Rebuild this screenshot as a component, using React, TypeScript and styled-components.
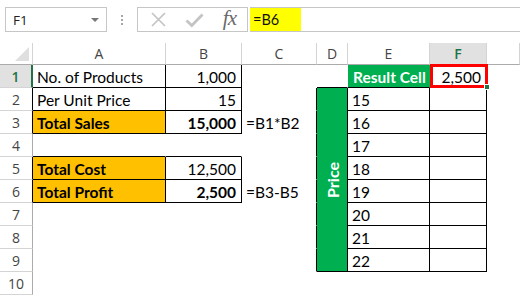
import React from "react";
import styled, { createGlobalStyle } from "styled-components";

const INK = "#000";
const HEAD_LINE = "#d4d4d4";
const SELECT_GREEN = "#217346";
const ORANGE = "#ffc000";
const GREEN = "#00b050";

const GlobalStyle = createGlobalStyle`
  html, body {
    margin: 0;
    padding: 0;
    background: #fff;
  }
  body {
    width: 520px;
    height: 295px;
    overflow: hidden;
    font-family: Lato, "Liberation Sans", sans-serif;
  }
`;

/* ---------- formula bar ---------- */

const Toolbar = styled.div`
  display: flex;
  align-items: stretch;
  height: 25px;
  padding: 7px 0 11px 5px;
`;

const NameBox = styled.div`
  box-sizing: border-box;
  width: 102px;
  border: 1px solid #c6c6c6;
  display: flex;
  align-items: center;
  justify-content: space-between;
  padding: 0 7px 0 7px;
  font-family: "Open Sans", "Liberation Sans", sans-serif;
  font-size: 13.5px;
  color: #222;
`;

const DropArrow = styled.span`
  width: 0;
  height: 0;
  border-left: 4px solid transparent;
  border-right: 4px solid transparent;
  border-top: 4px solid #777;
`;

const Grip = styled.div`
  width: 30px;
  display: flex;
  flex-direction: column;
  align-items: center;
  justify-content: center;
  gap: 2px;
  span {
    width: 2px;
    height: 2px;
    background: #a6a6a6;
  }
`;

const FxBox = styled.div`
  box-sizing: border-box;
  width: 111px;
  border: 1px solid #c6c6c6;
  display: flex;
  align-items: center;
  justify-content: space-between;
  padding: 0 11px 0 12px;
`;

const FxLabel = styled.span`
  font-family: "Liberation Serif", serif;
  font-style: italic;
  font-size: 21px;
  color: #6a6a6a;
  letter-spacing: -1px;
  margin-top: -2px;
`;

const FormulaInput = styled.div`
  flex: 1;
  margin-left: 2px;
  border-top: 1px solid #c6c6c6;
  border-bottom: 1px solid #c6c6c6;
  display: flex;
`;

const Highlight = styled.span`
  width: 51px;
  background: #ffff00;
  display: flex;
  align-items: center;
  padding-left: 3px;
  box-sizing: border-box;
  font-size: 14.5px;
  color: #111;
`;

/* ---------- sheet ---------- */

const Sheet = styled.div`
  display: grid;
  grid-template-columns: 33px 133px 76px 75px 31px 82px 57px 1fr;
  grid-template-rows: 22px repeat(10, 23px);
`;

const Corner = styled.div`
  box-sizing: border-box;
  border-right: 1px solid ${HEAD_LINE};
  border-bottom: 1px solid #ababab;
  display: flex;
  align-items: flex-end;
  justify-content: flex-end;
  padding: 0 3px 3px 0;
  &::after {
    content: "";
    width: 0;
    height: 0;
    border-left: 14px solid transparent;
    border-bottom: 14px solid #dfdfdf;
  }
`;

const ColHead = styled.div<{ $selected?: boolean }>`
  box-sizing: border-box;
  border-right: 1px solid ${HEAD_LINE};
  border-bottom: 1px solid #ababab;
  background: ${(p) => (p.$selected ? "#e1e1e1" : "#fff")};
  color: ${(p) => (p.$selected ? SELECT_GREEN : "#444")};
  font-weight: ${(p) => (p.$selected ? 600 : 400)};
  font-family: "Open Sans", "Liberation Sans", sans-serif;
  font-size: 14px;
  display: flex;
  align-items: center;
  justify-content: center;
`;

const RowHead = styled.div<{ $selected?: boolean; $edge?: string }>`
  box-sizing: border-box;
  border-bottom: 1px solid ${HEAD_LINE};
  border-right: ${(p) =>
    p.$selected ? `2px solid ${SELECT_GREEN}` : `1px solid ${p.$edge ?? "#ababab"}`};
  background: ${(p) => (p.$selected ? "#e1e1e1" : "#fff")};
  color: ${(p) => (p.$selected ? SELECT_GREEN : "#444")};
  font-weight: ${(p) => (p.$selected ? 600 : 400)};
  font-family: "Open Sans", "Liberation Sans", sans-serif;
  font-size: 14px;
  display: flex;
  align-items: center;
  justify-content: center;
  padding-top: 1px;
`;

const Cell = styled.div<{
  $r?: boolean;
  $b?: boolean;
  $fill?: string;
  $bold?: boolean;
  $right?: boolean;
  $color?: string;
}>`
  box-sizing: border-box;
  position: relative;
  border-right: 1px solid ${(p) => (p.$r ? INK : "transparent")};
  border-bottom: 1px solid ${(p) => (p.$b ? INK : "transparent")};
  background: ${(p) => p.$fill ?? "transparent"};
  color: ${(p) => p.$color ?? "#000"};
  font-weight: ${(p) => (p.$bold ? 700 : 400)};
  font-size: 15.5px;
  display: flex;
  align-items: center;
  justify-content: ${(p) => (p.$right ? "flex-end" : "flex-start")};
  padding: 2px 5px 0 4px;
  white-space: nowrap;
`;

const SelectedCell = styled(Cell)`
  &::after {
    content: "";
    position: absolute;
    left: 0;
    top: -1px;
    right: -2px;
    bottom: -1px;
    border: 3px solid #ff0000;
  }
`;

const FillHandle = styled.span`
  position: absolute;
  right: -4px;
  bottom: -3px;
  width: 4px;
  height: 4px;
  background: ${SELECT_GREEN};
  border: 1px solid #fff;
  z-index: 2;
`;

const PriceCell = styled.div`
  grid-column: 5;
  grid-row: 3 / span 8;
  box-sizing: border-box;
  background: ${GREEN};
  border-right: 1px solid ${INK};
  border-bottom: 1px solid ${INK};
  display: flex;
  align-items: center;
  justify-content: center;
  span {
    writing-mode: vertical-rl;
    transform: rotate(180deg);
    color: #fff;
    font-weight: 700;
    font-size: 16px;
  }
`;

type Row = {
  n: number;
  edge?: string;
  selected?: boolean;
  cells: React.ReactNode;
};

const prices = [15, 16, 17, 18, 19, 20, 21, 22];

const labels: Record<number, string> = {
  1: "No. of Products",
  2: "Per Unit Price",
  3: "Total Sales",
  5: "Total Cost",
  6: "Total Profit",
};
const values: Record<number, string> = {
  1: "1,000",
  2: "15",
  3: "15,000",
  5: "12,500",
  6: "2,500",
};
const formulas: Record<number, string> = { 3: "=B1*B2", 6: "=B3-B5" };

const tableRow = (r: number) => {
  const framed = r <= 3 || r === 5 || r === 6;
  const orange = r === 3 || r === 5 || r === 6;
  const bold = r === 3 || r === 6;
  const edgeBottom = framed || r === 4;
  return (
    <>
      <Cell $r={framed} $b={edgeBottom} $fill={orange ? ORANGE : undefined} $bold={orange}>
        {labels[r]}
      </Cell>
      <Cell $r={framed} $b={edgeBottom} $right $bold={bold}>
        {values[r]}
      </Cell>
      <Cell $r={r >= 2 && r <= 9}>{formulas[r]}</Cell>
    </>
  );
};

export default function App() {
  const rows: Row[] = [];
  for (let r = 1; r <= 10; r++) {
    const framed = r <= 3 || r === 5 || r === 6;
    let tail: React.ReactNode;
    if (r === 1) {
      tail = (
        <>
          <Cell $b />
          <Cell $b $fill={GREEN} $bold $color="#fff" style={{ paddingLeft: 5 }}>
            Result Cell
          </Cell>
          <SelectedCell $b $right>
            2,500
            <FillHandle />
          </SelectedCell>
          <Cell />
        </>
      );
    } else if (r <= 9) {
      tail = (
        <>
          <Cell $r $b>{prices[r - 2]}</Cell>
          <Cell $r $b />
          <Cell />
        </>
      );
    } else {
      tail = (
        <>
          <Cell />
          <Cell />
          <Cell />
          <Cell />
        </>
      );
    }
    rows.push({
      n: r,
      selected: r === 1,
      edge: framed ? INK : undefined,
      cells: (
        <>
          {tableRow(r)}
          {tail}
        </>
      ),
    });
  }

  return (
    <>
      <GlobalStyle />
      <Toolbar>
        <NameBox>
          F1
          <DropArrow />
        </NameBox>
        <Grip>
          <span />
          <span />
          <span />
        </Grip>
        <FxBox>
          <svg width="17" height="17" viewBox="0 0 17 17">
            <path d="M2 2 L15 15 M15 2 L2 15" stroke="#c4c4c4" strokeWidth="1.7" fill="none" />
          </svg>
          <svg width="19" height="16" viewBox="0 0 19 16">
            <path d="M1.5 8.5 L6.8 13.5 L17.5 2.5" stroke="#c4c4c4" strokeWidth="2.8" fill="none" />
          </svg>
          <FxLabel>fx</FxLabel>
        </FxBox>
        <FormulaInput>
          <Highlight>=B6</Highlight>
        </FormulaInput>
      </Toolbar>
      <Sheet>
        <Corner />
        <ColHead>A</ColHead>
        <ColHead>B</ColHead>
        <ColHead>C</ColHead>
        <ColHead>D</ColHead>
        <ColHead>E</ColHead>
        <ColHead $selected>F</ColHead>
        <ColHead />
        <PriceCell>
          <span>Price</span>
        </PriceCell>
        {rows.map((row) => (
          <React.Fragment key={row.n}>
            <RowHead $selected={row.selected} $edge={row.edge}>
              {row.n}
            </RowHead>
            {row.cells}
          </React.Fragment>
        ))}
      </Sheet>
    </>
  );
}
